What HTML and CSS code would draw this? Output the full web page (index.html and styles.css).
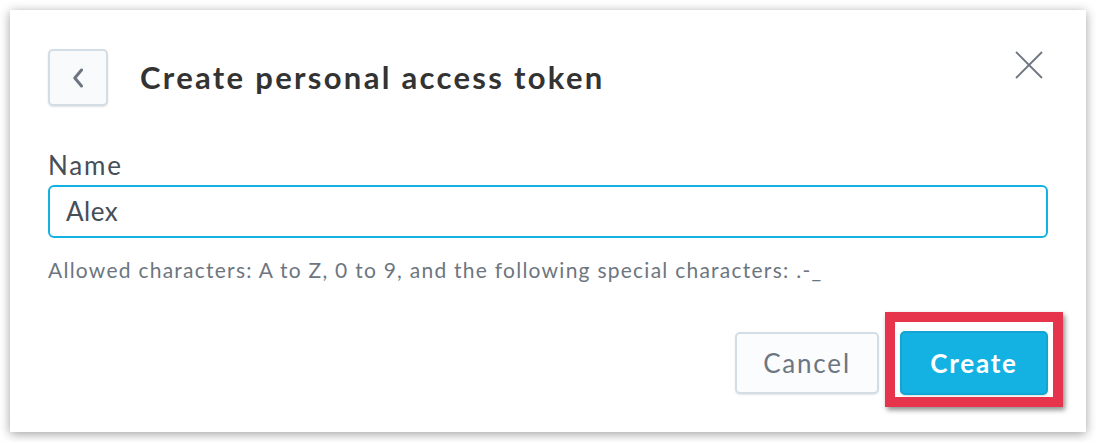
FILE: index.html
```html
<!DOCTYPE html>
<html lang="en">
<head>
<meta charset="utf-8">
<title>Create personal access token</title>
<link rel="stylesheet" href="styles.css">
</head>
<body>
<div class="dialog">
  <div class="header">
    <button class="back-btn" aria-label="Back">
      <svg width="12" height="20" viewBox="0 0 12 20"><path d="M9.5 2 L2.8 10 L9.5 18" fill="none" stroke="#6d7680" stroke-width="3" stroke-linecap="round" stroke-linejoin="round"/></svg>
    </button>
    <h1 class="title">Create personal access token</h1>
    <button class="close-btn" aria-label="Close">
      <svg width="28" height="28" viewBox="0 0 28 28"><path d="M1 1 L27 27 M27 1 L1 27" fill="none" stroke="#6d7680" stroke-width="1.8"/></svg>
    </button>
  </div>
  <label class="label">Name</label>
  <div class="input">Alex</div>
  <p class="hint">Allowed characters: A to Z, 0 to 9, and the following special characters: .-_</p>
  <div class="actions">
    <button class="btn btn-cancel">Cancel</button>
    <div class="highlight">
      <button class="btn btn-create">Create</button>
    </div>
  </div>
</div>
</body>
</html>
```

FILE: styles.css
```css
* { box-sizing: border-box; }
html, body { margin: 0; padding: 0; background: #fff; }
body { font-family: Lato, "Open Sans", sans-serif; }

.dialog {
  margin: 10px;
  width: 1076px;
  height: 422px;
  background: #fff;
  box-shadow: 0 2px 10px rgba(0,0,0,0.38);
  padding: 39px 38px 37px 38px;
  display: flex;
  flex-direction: column;
}

.header {
  display: flex;
  align-items: center;
  height: 57px;
}

.back-btn {
  width: 60px;
  height: 57px;
  border: 2px solid #d3dde6;
  border-radius: 5px;
  background: #f9fafb;
  display: flex;
  align-items: center;
  justify-content: center;
  padding: 0;
  box-shadow: 0 1px 2px rgba(0,0,0,0.12);
}

.title {
  margin: -2px 0 0 32px;
  font-size: 31px;
  font-weight: 700;
  color: #333;
  letter-spacing: 2.3px;
}

.close-btn {
  margin-left: auto;
  align-self: flex-start;
  margin-top: 2px;
  margin-right: 5px;
  background: none;
  border: none;
  padding: 0;
  width: 28px;
  height: 28px;
}

.label {
  margin-top: 43px;
  font-size: 26px;
  line-height: 32px;
  color: #464e56;
  letter-spacing: 1.8px;
}

.input {
  margin-top: 4px;
  height: 53px;
  border: 2px solid #14b2e2;
  border-radius: 6px;
  padding: 0 16px;
  font-size: 26px;
  line-height: 49px;
  color: #464e56;
  letter-spacing: 0.5px;
}

.hint {
  margin: 20px 0 0 0;
  font-size: 21px;
  line-height: 24px;
  color: #6d7680;
  letter-spacing: 1.25px;
}

.actions {
  margin-top: auto;
  display: flex;
  justify-content: flex-end;
  align-items: center;
}

.btn {
  font-family: Lato, "Open Sans", sans-serif;
  font-size: 26px;
  border-radius: 5px;
  padding: 0;
  cursor: pointer;
  letter-spacing: 1.8px;
}

.btn-cancel {
  width: 144px;
  height: 62px;
  border: 2px solid #d3dde6;
  background: #fbfcfd;
  color: #6d7680;
  box-shadow: 0 1px 2px rgba(0,0,0,0.1);
}

.highlight {
  position: relative;
  margin-left: 21px;
}

.highlight::before {
  content: "";
  position: absolute;
  left: -15px;
  top: -19px;
  right: -15px;
  bottom: -12px;
  border: 10px solid #e5344b;
  box-shadow: 2px 3px 5px rgba(0,0,0,0.45);
  pointer-events: none;
}

.btn-create {
  display: block;
  width: 148px;
  height: 64px;
  border: 2px solid #12a5d3;
  background: #14b2e2;
  color: #fff;
  font-weight: 700;
  box-shadow: 0 1px 2px rgba(0,0,0,0.15);
}
```
